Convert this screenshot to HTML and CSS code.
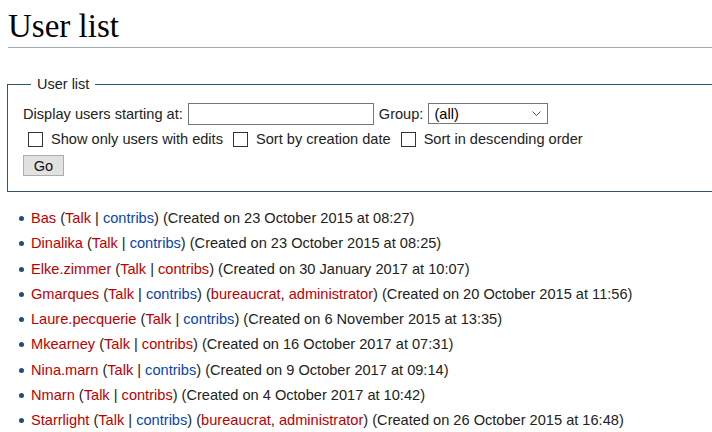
FILE: index.html
```html
<!DOCTYPE html>
<html>
<head>
<meta charset="utf-8">
<link rel="stylesheet" href="styles.css">
</head>
<body>
<div class="page">
  <h1 class="title">User list</h1>
  <fieldset class="box">
    <legend class="legend">User list</legend>
    <div class="row row-first">
      <span>Display users starting at:</span>
      <span class="input"></span>
      <span>Group:</span>
      <span class="select"><span class="sel-text">(all)</span><svg class="chev" width="9" height="5" viewBox="0 0 9 5"><path d="M0.5 0.5 L4.5 4.5 L8.5 0.5" fill="none" stroke="#555" stroke-width="1"/></svg></span>
    </div>
    <div class="row row-checks">
      <span class="check"></span><span class="lbl">Show only users with edits</span>
      <span class="check"></span><span class="lbl">Sort by creation date</span>
      <span class="check"></span><span class="lbl">Sort in descending order</span>
    </div>
    <div class="row row-btn">
      <span class="btn">Go</span>
    </div>
  </fieldset>
  <ul class="users">
    <li><a class="new">Bas</a> (<a class="new">Talk</a> | <a class="blue">contribs</a>) (Created on 23 October 2015 at 08:27)</li>
    <li><a class="new">Dinalika</a> (<a class="new">Talk</a> | <a class="blue">contribs</a>) (Created on 23 October 2015 at 08:25)</li>
    <li><a class="new">Elke.zimmer</a> (<a class="new">Talk</a> | <a class="new">contribs</a>) (Created on 30 January 2017 at 10:07)</li>
    <li><a class="new">Gmarques</a> (<a class="new">Talk</a> | <a class="blue">contribs</a>) (<a class="new">bureaucrat</a>, <a class="new">administrator</a>) (Created on 20 October 2015 at 11:56)</li>
    <li><a class="new">Laure.pecquerie</a> (<a class="new">Talk</a> | <a class="blue">contribs</a>) (Created on 6 November 2015 at 13:35)</li>
    <li><a class="new">Mkearney</a> (<a class="new">Talk</a> | <a class="new">contribs</a>) (Created on 16 October 2017 at 07:31)</li>
    <li><a class="new">Nina.marn</a> (<a class="new">Talk</a> | <a class="blue">contribs</a>) (Created on 9 October 2017 at 09:14)</li>
    <li><a class="new">Nmarn</a> (<a class="new">Talk</a> | <a class="new">contribs</a>) (Created on 4 October 2017 at 10:42)</li>
    <li><a class="new">Starrlight</a> (<a class="new">Talk</a> | <a class="blue">contribs</a>) (<a class="new">bureaucrat</a>, <a class="new">administrator</a>) (Created on 26 October 2015 at 16:48)</li>
  </ul>
</div>
</body>
</html>
```
FILE: styles.css
```css
html, body {
  margin: 0;
  padding: 0;
  background: #fff;
  overflow: hidden;
}
body {
  font-family: "Liberation Sans", Arial, sans-serif;
  font-size: 14.6px;
  color: #222;
}
.page {
  width: 760px;
  padding: 6px 0 0 8px;
}
.title {
  margin: 0;
  font-family: "Liberation Serif", "Times New Roman", serif;
  font-weight: normal;
  font-size: 33px;
  line-height: 40px;
  color: #000;
  border-bottom: 1px solid #a2a9b1;
  padding-bottom: 1px;
}
.box {
  margin: 28px 0 0 -1px;
  border: 1px solid #2a5575;
  padding: 0 16px 15px 15px;
}
.legend {
  padding: 0 6px;
  margin-left: 8px;
  font-size: 14.5px;
  line-height: 17px;
}
.row {
  display: flex;
  align-items: center;
  gap: 5px;
}
.row-first {
  height: 22px;
  margin-top: 10px;
}
.input {
  width: 184px;
  height: 20px;
  border: 1px solid #767676;
}
.select {
  border: 1px solid #767676;
  display: flex;
  align-items: center;
  justify-content: space-between;
  padding: 0 6px 0 5px;
  box-sizing: border-box;
  width: 120px;
  height: 21px;
  margin-top: -1px;
}
.sel-text {
  color: #000;
}
.chev {
  display: block;
}
.row-checks {
  height: 20px;
  margin-top: 4px;
  padding-left: 5px;
  gap: 0;
}
.check {
  width: 13px;
  height: 13px;
  border: 1px solid #333;
  margin-right: 8px;
}
.lbl {
  margin-right: 10px;
}
.row-btn {
  margin-top: 6px;
}
.btn {
  width: 41px;
  height: 21px;
  box-sizing: border-box;
  border: 1px solid #adadad;
  background: #e1e1e1;
  display: flex;
  align-items: center;
  justify-content: center;
  color: #111;
}
.users {
  margin: 16px 0 0 0;
  padding: 0 0 0 23px;
  list-style: none;
}
.users li {
  position: relative;
  line-height: 20px;
  margin-bottom: 5.25px;
}
.users li::before {
  content: "";
  position: absolute;
  left: -12px;
  top: 8px;
  width: 5px;
  height: 5px;
  border-radius: 50%;
  background: #1d4f7c;
}
a {
  text-decoration: none;
}
.new {
  color: #ba0000;
}
.blue {
  color: #0645ad;
}
```
